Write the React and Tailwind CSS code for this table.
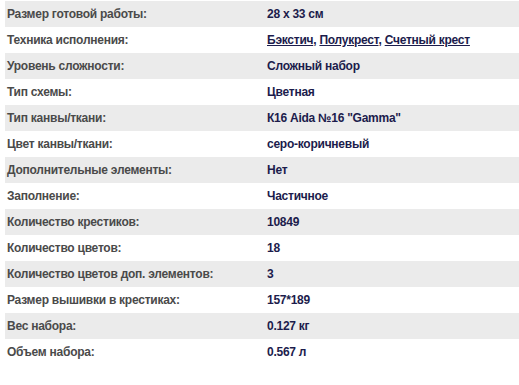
const rows = [
  ["Размер готовой работы:", "28 x 33 см"],
  ["Техника исполнения:", null],
  ["Уровень сложности:", "Сложный набор"],
  ["Тип схемы:", "Цветная"],
  ["Тип канвы/ткани:", "К16 Aida №16 \"Gamma\""],
  ["Цвет канвы/ткани:", "серо-коричневый"],
  ["Дополнительные элементы:", "Нет"],
  ["Заполнение:", "Частичное"],
  ["Количество крестиков:", "10849"],
  ["Количество цветов:", "18"],
  ["Количество цветов доп. элементов:", "3"],
  ["Размер вышивки в крестиках:", "157*189"],
  ["Вес набора:", "0.127 кг"],
  ["Объем набора:", "0.567 л"],
];

export default function App() {
  return (
    <div className="bg-white w-[519px] h-[385px] pt-px pl-[5px] font-['Liberation_Sans',Arial,sans-serif] text-[12px] font-bold tracking-[-0.25px]">
      {rows.map(([label, value], i) => (
        <div
          key={label}
          className={`flex h-[26px] items-center ${i % 2 === 0 ? "bg-[#ebebeb]" : "bg-white"}`}
        >
          <div className="w-[262px] pl-[2px] text-[#4a4a4a]">{label}</div>
          <div className="flex-1 text-[#1c1c4c]">
            {value ?? (
              <>
                <a href="#" className="underline">Бэкстич</a>,{" "}
                <a href="#" className="underline">Полукрест</a>,{" "}
                <a href="#" className="underline">Счетный крест</a>
              </>
            )}
          </div>
        </div>
      ))}
    </div>
  );
}
